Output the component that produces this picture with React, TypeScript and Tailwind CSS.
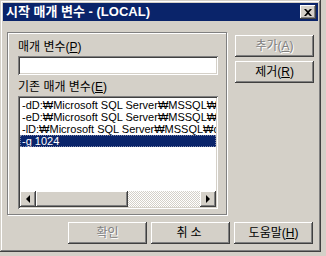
import React from "react";

const raised =
  "shadow-[inset_-1px_-1px_#404040,inset_1px_1px_#ffffff,inset_-2px_-2px_#808080,inset_2px_2px_#d4d0c8]";
const sunken =
  "shadow-[inset_1px_1px_#808080,inset_-1px_-1px_#ffffff,inset_2px_2px_#404040,inset_-2px_-2px_#d4d0c8]";

const params = [
  "-dD:₩Microsoft SQL Server₩MSSQL₩data₩master.mdf",
  "-eD:₩Microsoft SQL Server₩MSSQL₩log₩ERRORLOG",
  "-lD:₩Microsoft SQL Server₩MSSQL₩data₩mastlog.ldf",
  "-g 1024",
];

const Btn: React.FC<{ disabled?: boolean; children: React.ReactNode }> = ({ disabled, children }) => (
  <button
    className={`flex h-[22px] w-[79px] items-center justify-center bg-[#d4d0c8] text-[12px] leading-none ${raised} ${
      disabled ? "text-[#808080] [text-shadow:1px_1px_0_#ffffff]" : "text-black"
    }`}
  >
    {children}
  </button>
);

const App: React.FC = () => {
  const selected = 3;

  return (
    <div className="h-[256px] w-[326px] bg-[#d4d0c8] font-['Liberation_Sans','Noto_Sans_CJK_KR',sans-serif]">
      <div className="flex h-[252px] w-[321px] flex-col bg-[#d4d0c8] p-[3px] shadow-[inset_-1px_-1px_#404040,inset_1px_1px_#d4d0c8,inset_-2px_-2px_#808080,inset_2px_2px_#ffffff]">
        {/* title bar */}
        <div className="flex h-[18px] items-center justify-between bg-[#0a246a] pl-[3px] pr-[2px]">
          <span className="text-[13px] font-bold text-white">시작 매개 변수 - (LOCAL)</span>
          <div className={`flex h-[14px] w-[16px] items-center justify-center bg-[#d4d0c8] ${raised}`}>
            <svg width="8" height="7" viewBox="0 0 8 7">
              <path d="M0 0h2l2 2 2-2h2L5 3.5 8 7H6L4 5 2 7H0l3-3.5z" fill="#000" />
            </svg>
          </div>
        </div>

        {/* body */}
        <div className="flex flex-col px-[4px] pt-[11px]">
          <div className="flex">
            {/* group box */}
            <div className="h-[183px] w-[221px] border border-[#808080] pl-[10px] pt-[5px] shadow-[1px_1px_#ffffff,inset_1px_1px_#ffffff]">
              <div className="text-[12px] leading-[18px] text-black">
                매개 변수(<u>P</u>)
              </div>
              <div className={`h-[19px] w-[200px] bg-white ${sunken}`} />
              <div className="mt-[3px] text-[12px] leading-[18px] text-black">
                기존 매개 변수(<u>E</u>)
              </div>
              <div className={`flex h-[113px] w-[200px] flex-col bg-white p-[2px] ${sunken}`}>
                <div className="flex-1 overflow-hidden pt-[1px]">
                  {params.map((p, i) => (
                    <div
                      key={i}
                      className={`h-[12px] overflow-hidden whitespace-nowrap pl-[2px] text-[11px] leading-[12px] ${
                        i === selected
                          ? "bg-[#0a246a] text-white outline-1 -outline-offset-1 outline-dotted outline-[#8088a8]"
                          : "text-black"
                      }`}
                    >
                      {p}
                    </div>
                  ))}
                </div>
                {/* horizontal scrollbar */}
                <div className="flex h-[16px] bg-[repeating-conic-gradient(#d4d0c8_0_25%,#ffffff_0_50%)] bg-[length:2px_2px]">
                  <div className={`flex h-[16px] w-[16px] items-center justify-center bg-[#d4d0c8] ${raised}`}>
                    <div className="h-0 w-0 border-y-[4px] border-r-[4px] border-y-transparent border-r-black" />
                  </div>
                  <div className={`h-[16px] w-[92px] bg-[#d4d0c8] ${raised}`} />
                  <div className="flex-1" />
                  <div className={`flex h-[16px] w-[16px] items-center justify-center bg-[#d4d0c8] ${raised}`}>
                    <div className="h-0 w-0 border-y-[4px] border-l-[4px] border-y-transparent border-l-black" />
                  </div>
                </div>
              </div>
            </div>

            {/* side buttons */}
            <div className="ml-[8px] flex flex-col gap-[4px] pt-[3px]">
              <Btn disabled>
                추가(<u>A</u>)
              </Btn>
              <Btn>
                제거(<u>R</u>)
              </Btn>
            </div>
          </div>

          {/* bottom buttons */}
          <div className="mt-[7px] flex justify-end gap-[4px] pr-[1px]">
            <Btn disabled>확인</Btn>
            <Btn>
              <span className="tracking-[3px]">취소</span>
            </Btn>
            <Btn>
              도움말(<u>H</u>)
            </Btn>
          </div>
        </div>
      </div>
    </div>
  );
};

export default App;
